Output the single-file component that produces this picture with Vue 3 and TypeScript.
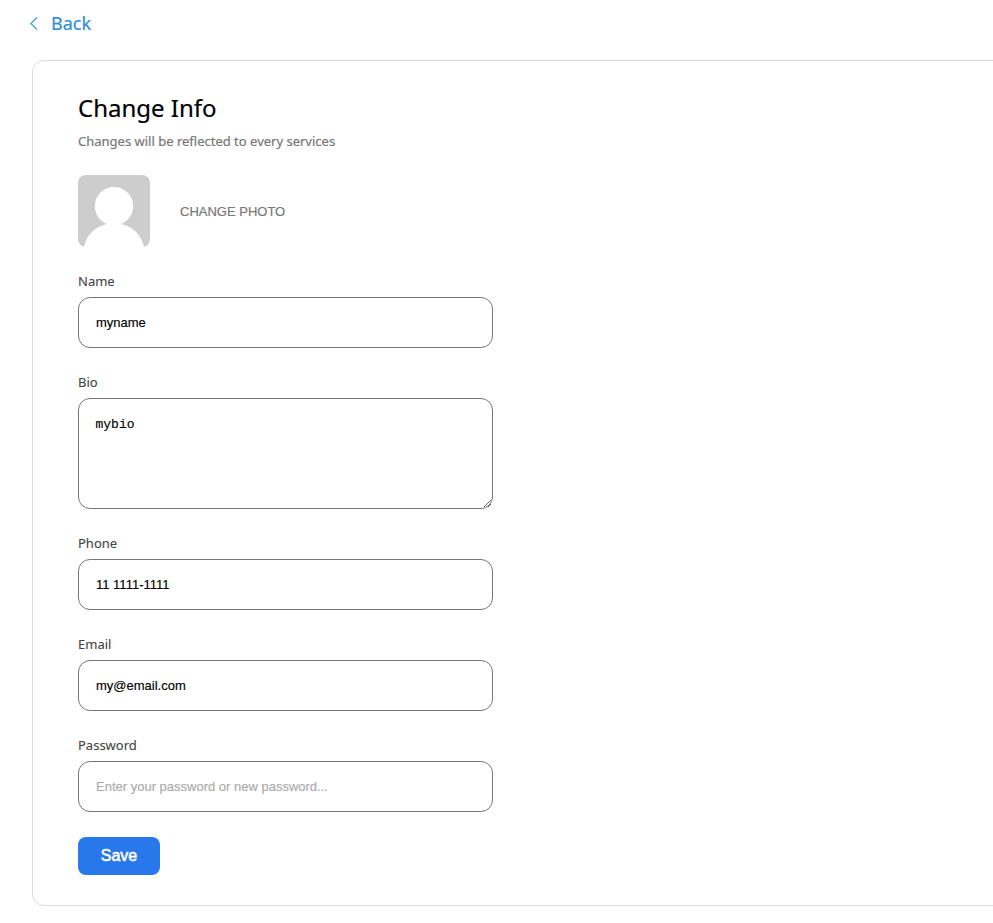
<script setup lang="ts">
import { ref } from 'vue'

const name = ref('myname')
const bio = ref('mybio')
const phone = ref('11 1111-1111')
const email = ref('my@email.com')
const password = ref('')
</script>

<template>
  <div class="page">
    <a class="back">
      <svg class="chevron" viewBox="0 0 8 14" width="8" height="14"><path d="M7 .5 .8 6.5 7 12.5" fill="none" stroke="#2d9cdb" stroke-width="1.1" /></svg>
      <span>Back</span>
    </a>
    <form class="card" @submit.prevent>
      <h1>Change Info</h1>
      <p class="sub">Changes will be reflected to every services</p>
      <div class="photo">
        <svg class="avatar" viewBox="0 0 72 72" width="72" height="72">
          <rect width="72" height="72" rx="8" fill="#cdcdcd" />
          <circle cx="36" cy="31.2" r="19.2" fill="#fff" />
          <path d="M6 72C8 61 17 51.5 28 49.3L30 47H42L44 49.3C55 51.5 64 61 66 72Z" fill="#fff" />
        </svg>
        <span class="change">CHANGE PHOTO</span>
      </div>
      <label class="field"><span>Name</span><input v-model="name" type="text" /></label>
      <label class="field"><span>Bio</span><textarea v-model="bio"></textarea></label>
      <label class="field"><span>Phone</span><input v-model="phone" type="text" /></label>
      <label class="field"><span>Email</span><input v-model="email" type="text" /></label>
      <label class="field"><span>Password</span><input v-model="password" type="password" placeholder="Enter your password or new password..." /></label>
      <button type="submit">Save</button>
    </form>
  </div>
</template>

<style>
html, body { margin: 0; overflow: hidden; background: #fff; }
</style>

<style scoped>
.page { width: 993px; height: 923px; overflow: hidden; font-family: "Noto Sans", sans-serif; }
.back { display: flex; align-items: center; height: 47px; margin-left: 30px; color: #2d8fd8; font-size: 18px; line-height: 25px; -webkit-text-stroke: 0.2px; }
.back span { margin-left: 13px; }
.card { box-sizing: border-box; width: 1100px; height: 846px; margin: 13px 0 0 32px; padding: 30px 45px; border: 1px solid #dcdcdc; border-radius: 12px; }
h1 { margin: 0; color: #000; font-size: 24px; font-weight: 400; line-height: 33px; -webkit-text-stroke: 0.2px; }
.sub { margin: 8px 0 0; color: #777; font-size: 13px; line-height: 18px; -webkit-text-stroke: 0.2px; }
.photo { display: flex; align-items: center; height: 72px; margin-top: 25px; }
.avatar { display: block; }
.change { margin-left: 30px; padding-top: 2px; color: #777; font: 13px/18px "Liberation Sans", sans-serif; -webkit-text-stroke: 0.2px; }
.field { display: block; width: 415px; margin-top: 25px; }
.field span { display: block; height: 18px; margin-bottom: 7px; color: #444; font-size: 13px; line-height: 18px; -webkit-text-stroke: 0.1px; }
input, textarea { display: block; box-sizing: border-box; width: 415px; height: 51px; margin: 0; padding: 0 17px; border: 1px solid #767676; border-radius: 12px; outline: none; background: #fff; color: #000; font: 13px "Liberation Sans", sans-serif; -webkit-text-stroke: 0.15px; }
textarea { height: 111px; padding: 18px 17px 16px 16.5px; font: 13px "Liberation Mono", monospace; resize: both; }
input::placeholder { color: #aaa; }
button { display: block; width: 82px; height: 38px; margin-top: 25px; padding: 0; border: 0; border-radius: 8px; background: #2877eb; color: #fff; font: 16px "Liberation Sans", sans-serif; -webkit-text-stroke: 0.5px; }
</style>
